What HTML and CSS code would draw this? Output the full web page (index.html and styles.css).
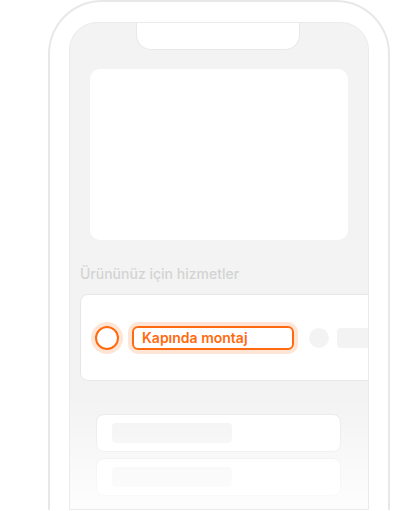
FILE: index.html
```html
<!DOCTYPE html>
<html>
<head>
  <title>Hizmetler</title>
  <meta name="viewport" content="width=device-width, initial-scale=1.0">
  <link rel="stylesheet" href="styles.css">
</head>
<body>
  <div class="phone">
    <div class="screen">
      <div class="notch"></div>

      <div class="hero-card"></div>

      <div class="services">
        <h3>Ürününüz için hizmetler</h3>
        <div class="service-card">
          <span class="radio"></span>
          <span class="service-label">Kapında montaj</span>
          <span class="dot"></span>
          <span class="bar"></span>
        </div>
      </div>

      <div class="option-list">
        <div class="option"><span class="option-bar"></span></div>
        <div class="option"><span class="option-bar"></span></div>
      </div>

      <div class="fade"></div>
    </div>
  </div>
</body>
</html>
```

FILE: styles.css
```css
body {
  margin: 0;
  background-color: #fff;
  font-family: Inter, "Noto Sans", sans-serif;
  overflow: hidden;
}

.phone {
  margin-left: 48px;
  width: 300px;
  height: 488px;
  padding: 20px 19px 0 19px;
  border: 2px solid #e8e8e8;
  border-bottom: none;
  border-radius: 54px 54px 0 0;
}

.screen {
  position: relative;
  height: 488px;
  padding: 46px 20px 0 20px;
  background-color: #f3f3f3;
  border: 1px solid #ebebeb;
  border-radius: 28px 28px 0 0;
  overflow: hidden;
  box-sizing: border-box;
}

.notch {
  position: absolute;
  top: -1px;
  left: 66px;
  width: 162px;
  height: 27px;
  background-color: #fff;
  border: 1px solid #e8e8e8;
  border-top: none;
  border-radius: 0 0 15px 15px;
}

.hero-card {
  height: 171px;
  background-color: #fff;
  border-radius: 10px;
}

.services {
  margin-left: -10px;
  margin-top: 25px;
}

.services h3 {
  margin: 0 0 11px 0;
  font-size: 14px;
  line-height: 18px;
  font-weight: 500;
  color: #d3d3d3;
}

.service-card {
  display: flex;
  align-items: center;
  width: 330px;
  height: 85px;
  padding-left: 14px;
  background-color: #fff;
  border: 1px solid #e6e6e6;
  border-radius: 8px;
}

.radio {
  width: 20px;
  height: 20px;
  border: 2px solid #ff6a10;
  border-radius: 50%;
  box-shadow: 0 0 0 4px #ffe5d5;
  flex-shrink: 0;
}

.service-label {
  display: flex;
  align-items: center;
  margin-left: 13px;
  width: 150px;
  height: 20px;
  padding-left: 8px;
  border: 2px solid #ff6a10;
  border-radius: 6px;
  box-shadow: 0 0 0 4px #ffe5d5;
  color: #ff6a10;
  font-size: 14px;
  font-weight: 600;
  flex-shrink: 0;
}

.dot {
  margin-left: 15px;
  width: 20px;
  height: 20px;
  border-radius: 50%;
  background-color: #f3f3f3;
  flex-shrink: 0;
}

.bar {
  margin-left: 8px;
  width: 80px;
  height: 20px;
  border-radius: 4px;
  background-color: #f3f3f3;
  flex-shrink: 0;
}

.option-list {
  display: flex;
  flex-direction: column;
  gap: 6px;
  margin: 33px 7px 0 6px;
}

.option {
  height: 38px;
  padding: 8px 0 0 15px;
  box-sizing: border-box;
  background-color: #fff;
  border: 1px solid #e8e8e8;
  border-radius: 8px;
}

.option-bar {
  display: block;
  width: 120px;
  height: 20px;
  border-radius: 4px;
  background-color: #f3f3f3;
}

.fade {
  position: absolute;
  left: 0;
  right: 0;
  bottom: 0;
  height: 110px;
  background: linear-gradient(to bottom, rgba(255, 255, 255, 0), rgba(255, 255, 255, 0.85));
}
```
